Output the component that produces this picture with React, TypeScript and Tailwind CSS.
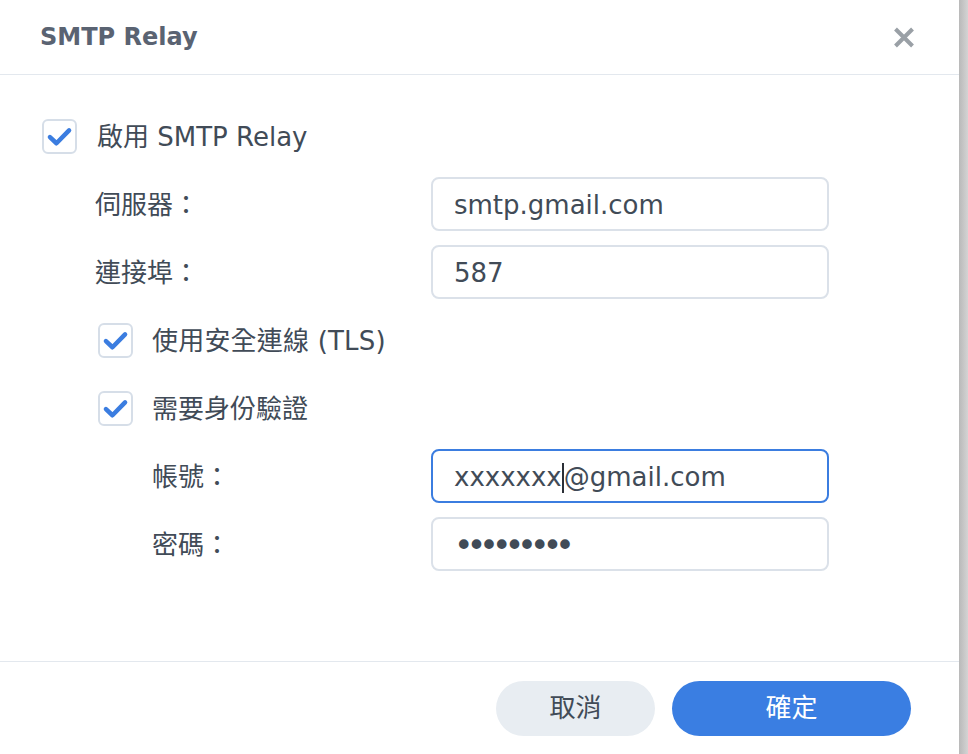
import React from "react";

const FONT = { fontFamily: '"DejaVu Sans", "Noto Sans CJK TC", sans-serif' };

function Check() {
  return (
    <div className="w-[35px] h-[35px] shrink-0 rounded-[6px] border-2 border-[#d6dee8] bg-white flex items-center justify-center">
      <svg width="27" height="27" viewBox="0 0 24 24" fill="none">
        <path d="M3.5 12.5 L9.3 18 L20.5 6.5" stroke="#3b7de0" strokeWidth="4" strokeLinecap="round" strokeLinejoin="round" />
      </svg>
    </div>
  );
}

function Field({ children, focused }: { children: React.ReactNode; focused?: boolean }) {
  return (
    <div
      className={`w-[398px] h-[54px] shrink-0 rounded-[8px] border-2 ${focused ? "border-[#3b7de0]" : "border-[#dbe1e9]"} bg-white flex items-center px-[21px] pt-[3px] text-[26px] text-[#414b57]`}
    >
      {children}
    </div>
  );
}

export default function App() {
  return (
    <div className="flex w-[968px] h-[754px] bg-white" style={FONT}>
      <div className="w-[959px] h-full flex flex-col bg-white">
        <div className="h-[75px] shrink-0 border-b border-[#e3e8ee] flex items-center justify-between pl-[40px] pr-[44px]">
          <div className="text-[24px] font-bold text-[#5a6372] leading-none">SMTP Relay</div>
          <svg width="22" height="21" viewBox="0 0 22 21" fill="none">
            <path d="M2.5 2 L19.5 19 M19.5 2 L2.5 19" stroke="#9aa0a6" strokeWidth="4" strokeLinecap="butt" />
          </svg>
        </div>
        <div className="h-[586px] shrink-0 pt-[34px] pl-[42px] pr-[130px] flex flex-col gap-[14px] text-[#414b57] text-[26px]">
          <div className="h-[54px] flex items-center">
            <Check />
            <span className="ml-[20px] text-[26px] pt-[2px]">啟用 SMTP Relay</span>
          </div>
          <div className="h-[54px] flex items-center pl-[53px]">
            <span className="flex-1 text-[26px] pt-[3px]">伺服器：</span>
            <Field>smtp.gmail.com</Field>
          </div>
          <div className="h-[54px] flex items-center pl-[53px]">
            <span className="flex-1 text-[26px] pt-[3px]">連接埠：</span>
            <Field>587</Field>
          </div>
          <div className="h-[54px] flex items-center pl-[56px]">
            <Check />
            <span className="ml-[19px] text-[26px] pt-[2px] tracking-[0.2px]">使用安全連線 (TLS)</span>
          </div>
          <div className="h-[54px] flex items-center pl-[56px]">
            <Check />
            <span className="ml-[19px] text-[26px] pt-[2px]">需要身份驗證</span>
          </div>
          <div className="h-[54px] flex items-center pl-[110px]">
            <span className="flex-1 text-[26px] pt-[3px]">帳號：</span>
            <Field focused>
              <span>xxxxxxx</span>
              <span className="inline-block w-[2px] h-[30px] bg-[#2b2f36]" />
              <span>@gmail.com</span>
            </Field>
          </div>
          <div className="h-[54px] flex items-center pl-[110px]">
            <span className="flex-1 text-[26px] pt-[3px]">密碼：</span>
            <Field>
              <span className="text-[33px] tracking-[-6.8px] leading-none">•••••••••</span>
            </Field>
          </div>
        </div>
        <div className="flex-1 border-t border-[#e3e8ee] flex items-center justify-end gap-[17px] pr-[48px]">
          <button className="w-[159px] h-[55px] rounded-full bg-[#e8edf2] text-[#414b57] text-[26px]">取消</button>
          <button className="w-[239px] h-[55px] rounded-full bg-[#3a7ee2] text-white text-[26px]">確定</button>
        </div>
      </div>
      <div className="w-[9px] h-full bg-gradient-to-r from-[#b9b9b9] to-[#d4d4d4]" />
    </div>
  );
}
